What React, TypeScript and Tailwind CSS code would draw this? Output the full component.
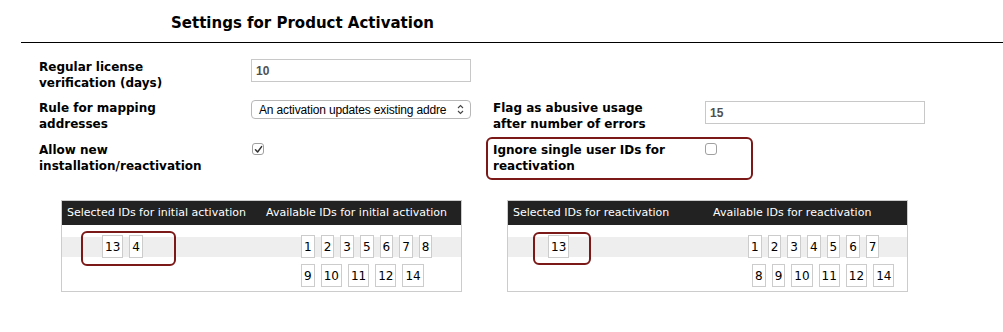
import React from "react";

const Badge = ({ n }: { n: string }) => (
  <span className="h-[23px] px-[2px] border border-[#cccccc] bg-white flex items-center justify-center text-[12px] text-black leading-none">
    {n}
  </span>
);

const BadgeRow = ({ items, pl }: { items: string[]; pl: string }) => (
  <div className={`flex gap-[6px] ${pl}`}>
    {items.map((n) => (
      <Badge key={n} n={n} />
    ))}
  </div>
);

const Checkbox = ({ checked }: { checked?: boolean }) => (
  <span className="w-[12px] h-[12px] rounded-[3px] border border-[#a0a0a0] bg-white flex items-center justify-center">
    {checked && (
      <svg width="9" height="9" viewBox="0 0 9 9">
        <path d="M1.5 4.8 L3.6 7 L7.6 1.6" fill="none" stroke="#333" strokeWidth="1.5" strokeLinecap="round" strokeLinejoin="round" />
      </svg>
    )}
  </span>
);

const Label = ({ l1, l2 }: { l1: string; l2: string }) => (
  <div className="text-[12px] leading-[16px] font-bold text-black">
    {l1}
    <br />
    {l2}
  </div>
);

const TextBox = ({ value }: { value: string }) => (
  <div className="w-[220px] h-[23px] border border-[#c8c8c8] bg-white flex items-center pl-[4px] font-['Liberation_Sans',sans-serif] font-bold text-[12px] text-[#505050]">
    {value}
  </div>
);

const IdTable = ({
  selTitle,
  avTitle,
  selected,
  rows,
  box,
  col1,
}: {
  selTitle: string;
  avTitle: string;
  selected: string[];
  rows: { items: string[]; pl: string }[];
  box: string;
  col1: string;
}) => (
  <div className="w-[401px] border border-[#cccccc] bg-white">
    <div className="h-[24px] bg-[#222222] flex items-center text-white text-[11px]">
      <div className={`${col1} pl-[5px]`}>{selTitle}</div>
      <div className="pl-[5px]">{avTitle}</div>
    </div>
    <div className="relative flex pt-[10px] pb-[4px] bg-[linear-gradient(to_bottom,#ffffff_12px,#eeeeee_12px,#eeeeee_32px,#ffffff_32px)]">
      <div className={`${col1} pl-[40px]`}>
        <div className="flex gap-[6px]">
          {selected.map((n) => (
            <Badge key={n} n={n} />
          ))}
        </div>
      </div>
      <div className="flex flex-col gap-[6px]">
        {rows.map((r, i) => (
          <BadgeRow key={i} items={r.items} pl={r.pl} />
        ))}
      </div>
      <div className={`absolute border-2 border-[#7b1818] rounded-[6px] ${box}`} />
    </div>
  </div>
);

export default function App() {
  return (
    <div className="w-[1003px] h-[332px] bg-white overflow-hidden font-['DejaVu_Sans','Verdana',sans-serif] text-black">
      <div className="pt-[14px] pl-[171px] text-[15px] leading-[18px] font-bold">
        Settings for Product Activation
      </div>
      <div className="ml-[21px] mt-[10px] border-t border-black" />

      <div className="pl-[39px]">
        <div className="flex mt-[16px]">
          <div className="w-[212px]">
            <Label l1="Regular license" l2="verification (days)" />
          </div>
          <TextBox value="10" />
        </div>

        <div className="flex mt-[9px]">
          <div className="w-[212px]">
            <Label l1="Rule for mapping" l2="addresses" />
          </div>
          <div className="w-[242px]">
            <div className="w-[220px] h-[19px] border border-[#b8b8b8] rounded-[4px] bg-white flex items-center pl-[7px] pr-[6px] font-['Liberation_Sans',sans-serif] text-[12px] tracking-[-0.15px] text-black">
              <div className="whitespace-nowrap">An activation updates existing addre</div>
              <div className="flex-1" />
              <svg width="7" height="11" viewBox="0 0 7 11">
                <path d="M1 4 L3.5 1.5 L6 4 M1 7 L3.5 9.5 L6 7" fill="none" stroke="#444" strokeWidth="1.1" />
              </svg>
            </div>
          </div>
          <div className="w-[212px]">
            <Label l1="Flag as abusive usage" l2="after number of errors" />
          </div>
          <div className="mt-[1px]">
            <TextBox value="15" />
          </div>
        </div>

        <div className="flex mt-[10px]">
          <div className="w-[212px]">
            <Label l1="Allow new" l2="installation/reactivation" />
          </div>
          <div className="w-[242px] pt-[1px] pl-[1px]">
            <Checkbox checked />
          </div>
          <div className="w-[212px] relative">
            <Label l1="Ignore single user IDs for" l2="reactivation" />
            <div className="absolute left-[-7px] top-[-5px] w-[267px] h-[43px] border-2 border-[#7b1818] rounded-[6px]" />
          </div>
          <div className="pt-[1px]">
            <Checkbox />
          </div>
        </div>
      </div>

      <div className="flex gap-[45px] pl-[61px] mt-[26px]">
        <IdTable
          selTitle="Selected IDs for initial activation"
          avTitle="Available IDs for initial activation"
          selected={["13", "4"]}
          rows={[
            { items: ["1", "2", "3", "5", "6", "7", "8"], pl: "pl-[40px]" },
            { items: ["9", "10", "11", "12", "14"], pl: "pl-[40px]" },
          ]}
          box="left-[19px] top-[6px] w-[95px] h-[35px]"
          col1="w-[199px]"
        />
        <IdTable
          selTitle="Selected IDs for reactivation"
          avTitle="Available IDs for reactivation"
          selected={["13"]}
          rows={[
            { items: ["1", "2", "3", "4", "5", "6", "7"], pl: "pl-[40px]" },
            { items: ["8", "9", "10", "11", "12", "14"], pl: "pl-[44px]" },
          ]}
          box="left-[25px] top-[7px] w-[58px] h-[33px]"
          col1="w-[200px]"
        />
      </div>
    </div>
  );
}
